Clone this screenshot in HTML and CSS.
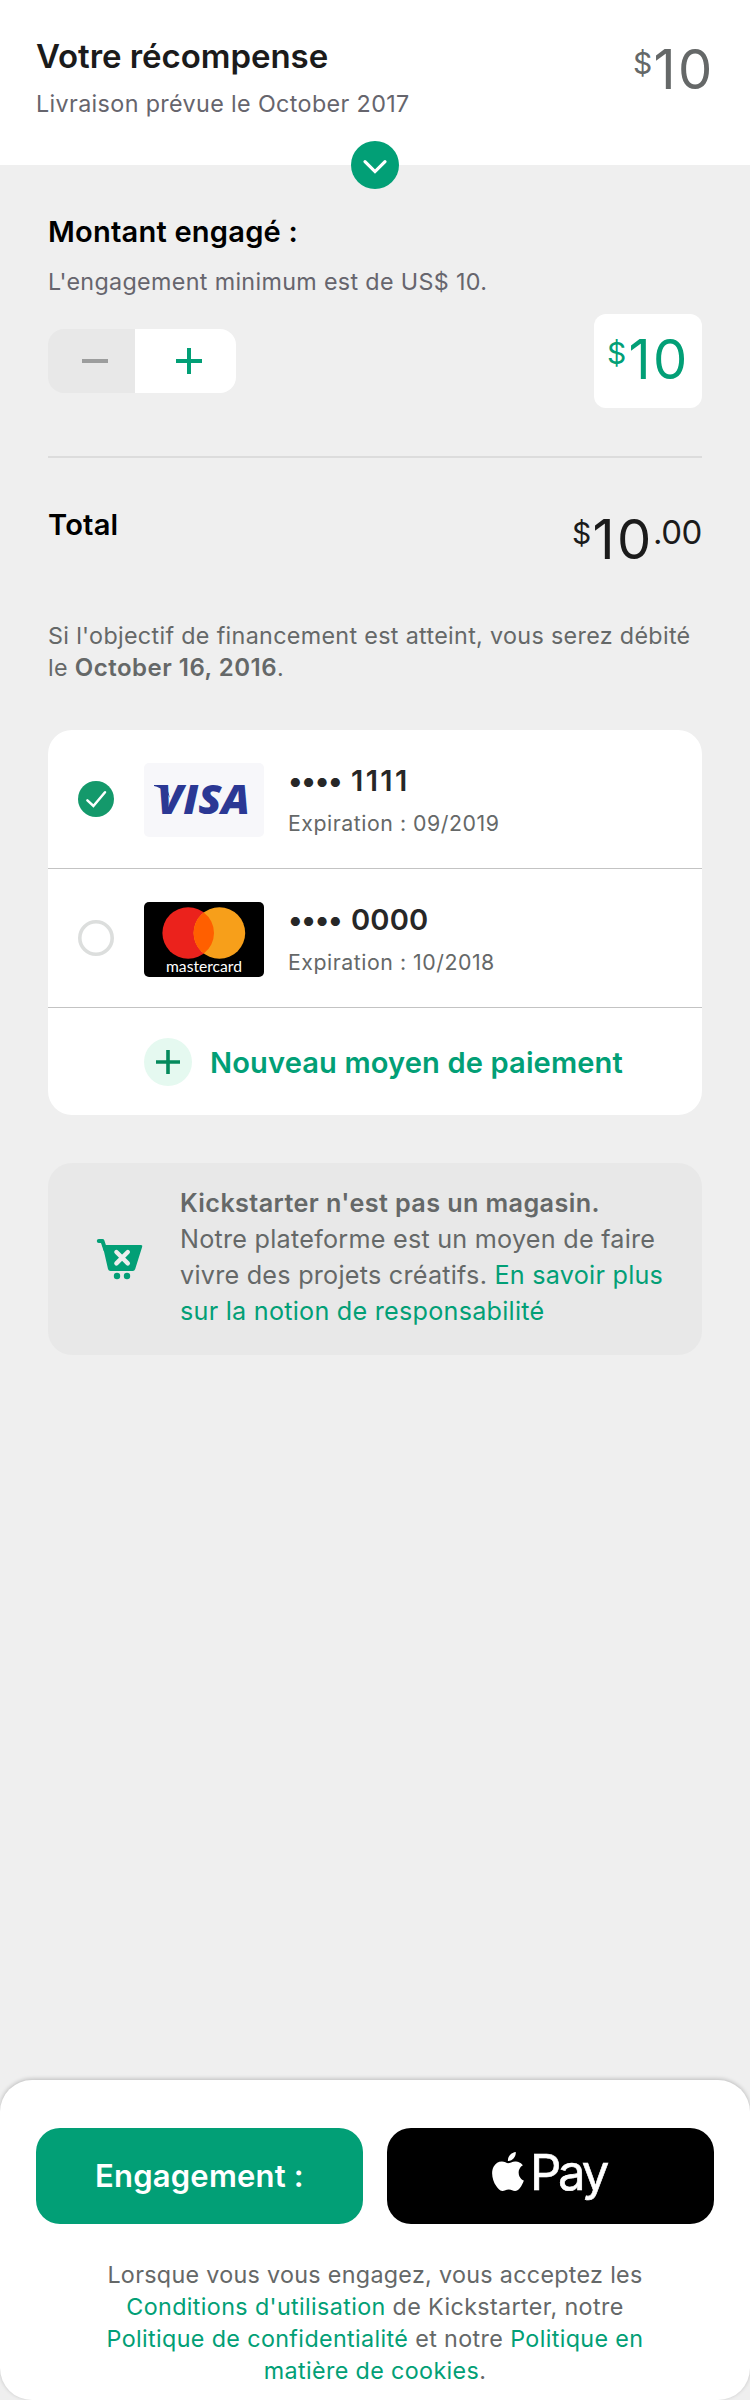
FILE: index.html
```html
<!DOCTYPE html>
<html lang="fr">
<head>
<meta charset="utf-8">
<title>Votre récompense</title>
<link rel="stylesheet" href="styles.css">
</head>
<body>
<div class="screen">
  <header class="reward">
    <div>
      <h1 class="reward-title">Votre récompense</h1>
      <p class="text reward-delivery">Livraison prévue le October 2017</p>
    </div>
    <div class="amount reward-amount"><span class="amount-sign">$</span><span class="amount-value">10</span></div>
    <button class="reward-toggle" aria-label="Détails">
      <svg width="48" height="48" viewBox="0 0 48 48"><path d="M14 20.6l10 10 10-10" fill="none" stroke="#fff" stroke-width="3.2" stroke-linecap="round"/></svg>
    </button>
  </header>

  <main class="content">
    <h2 class="heading">Montant engagé :</h2>
    <p class="text minimum">L'engagement minimum est de US$ 10.</p>
    <div class="pledge">
      <div class="stepper">
        <button class="step step-minus" aria-label="Moins"><svg width="26" height="26" viewBox="0 0 26 26"><path d="M0 13h26" stroke="#9c9d9d" stroke-width="4"/></svg></button>
        <button class="step step-plus" aria-label="Plus"><svg width="26" height="26" viewBox="0 0 26 26"><path d="M0 13h26M13 0v26" stroke="#029f76" stroke-width="4"/></svg></button>
      </div>
      <div class="amount pledge-amount"><span class="amount-sign">$</span><span class="amount-value">10</span></div>
    </div>
    <div class="rule"></div>
    <div class="total">
      <h2 class="heading">Total</h2>
      <div class="amount total-amount"><span class="amount-sign">$</span><span class="amount-value">10</span><span class="amount-cents">.00</span></div>
    </div>
    <p class="text debit">Si l'objectif de financement est atteint, vous serez débité<br>le <strong>October 16, 2016</strong>.</p>

    <section class="cards">
      <div class="card-row">
        <svg class="radio" width="36" height="36" viewBox="0 0 36 36"><circle cx="18" cy="18" r="18" fill="#14996b"/><path d="M9.4 19.3l6 5.7L27 11.2" fill="none" stroke="#fff" stroke-width="2.5" stroke-linecap="round"/></svg>
        <svg class="thumb" width="120" height="74" viewBox="0 0 120 74">
          <rect width="120" height="74" rx="5" fill="#f7f7fa"/>
          <path d="M10 22h12l4 13c-3-6-8-10-16-12z" fill="#2b3894"/>
          <text class="visa" x="13" y="51.4" textLength="93" lengthAdjust="spacingAndGlyphs">VISA</text>
        </svg>
        <div class="card-info">
          <div class="card-number"><span class="dots">••••</span><span class="digits digits-ones">1111</span></div>
          <div class="card-date">Expiration : 09/2019</div>
        </div>
      </div>
      <div class="card-row">
        <svg class="radio" width="36" height="36" viewBox="0 0 36 36"><circle cx="18" cy="18" r="16.2" fill="none" stroke="#dcdedd" stroke-width="3.6"/></svg>
        <svg class="thumb" width="120" height="75" viewBox="0 0 120 75">
          <rect width="120" height="75" rx="5" fill="#000"/>
          <circle cx="44.2" cy="31" r="25.8" fill="#eb221c"/>
          <circle cx="75.4" cy="31" r="25.8" fill="#f79f1a"/>
          <path d="M59.8 10.45a25.8 25.8 0 0 1 0 41.1a25.8 25.8 0 0 1 0-41.1z" fill="#ff5f00"/>
          <text class="mastercard" x="22" y="69.6" textLength="76" lengthAdjust="spacingAndGlyphs">mastercard</text>
        </svg>
        <div class="card-info">
          <div class="card-number"><span class="dots">••••</span><span class="digits">0000</span></div>
          <div class="card-date">Expiration : 10/2018</div>
        </div>
      </div>
      <div class="card-new">
        <svg width="48" height="48" viewBox="0 0 48 48"><circle cx="24" cy="24" r="24" fill="#e5f9f0"/><path d="M12 24h24M24 12v24" stroke="#048a5c" stroke-width="3.6"/></svg>
        <span class="card-new-label">Nouveau moyen de paiement</span>
      </div>
    </section>

    <aside class="notice">
      <svg class="cart" width="48" height="42" viewBox="0 0 48 42">
        <path d="M2.8 2.9h3.6l3 9" fill="none" stroke="#029f76" stroke-width="4" stroke-linecap="round" stroke-linejoin="round"/>
        <path d="M6.5 7h38.5q1.8 0 1.2 1.7l-7 22.3q-.7 2-2.3 2H14.5q-2 0-2.5-2z" fill="#029f76"/>
        <path d="M20.4 14l11.4 11.400M31.800 14L20.400 25.400" stroke="#eee" stroke-width="4.400" stroke-linecap="round"/>
        <circle cx="21" cy="38" r="3.200" fill="#029f76"/><circle cx="31" cy="38" r="3.200" fill="#029f76"/>
      </svg>
      <p class="notice-text"><strong>Kickstarter n'est pas un magasin.</strong><br>Notre plateforme est un moyen de faire<br>vivre des projets créatifs. <a class="link">En savoir plus<br>sur la notion de responsabilité</a></p>
    </aside>
  </main>

  <footer class="footer">
    <div class="actions">
      <button class="action action-pledge">Engagement :</button>
      <button class="action action-apple" aria-label="Apple Pay">
        <svg width="32" height="39" viewBox="2.2 0 19.6 24"><path fill="#fff" d="M12.152 6.896c-.948 0-2.415-1.078-3.960-1.040-2.040.027-3.910 1.183-4.961 3.014-2.117 3.675-.546 9.103 1.519 12.090 1.013 1.454 2.208 3.090 3.792 3.039 1.520-.065 2.090-.987 3.935-.987 1.831 0 2.350.987 3.960.948 1.637-.026 2.676-1.480 3.676-2.948 1.156-1.688 1.636-3.325 1.662-3.415-.039-.013-3.182-1.221-3.220-4.857-.026-3.040 2.480-4.494 2.597-4.559-1.429-2.090-3.623-2.324-4.390-2.376-2-.156-3.675 1.090-4.610 1.090zM15.530 3.830c.843-1.012 1.400-2.427 1.245-3.830-1.207.052-2.662.805-3.532 1.818-.780.896-1.454 2.338-1.273 3.714 1.338.104 2.715-.688 3.559-1.701"/></svg>
        <span class="pay">Pay</span>
      </button>
    </div>
    <p class="text terms"><span class="terms-intro">Lorsque vous vous engagez, vous acceptez les</span><br><a class="link">Conditions d'utilisation</a> de Kickstarter, notre<br><a class="link">Politique de confidentialité</a> et notre <a class="link">Politique en<br>matière de cookies</a>.</p>
  </footer>
</div>
</body>
</html>
```
FILE: styles.css
```css
* { box-sizing: border-box; }
body {
  margin: 0;
  background: #efefef;
  font-family: "Inter", "Liberation Sans", sans-serif;
  color: #656868;
}
h1, h2, p { margin: 0; font-weight: 400; }
button { border: 0; padding: 0; font-family: inherit; }
strong { font-weight: 600; }
svg { display: block; flex: none; }
.screen { display: flex; flex-direction: column; width: 750px; height: 2400px; overflow: hidden; }

.text { font-size: 23.3px; line-height: 32px; letter-spacing: .37px; white-space: nowrap; }
.heading { font-size: 29.1px; line-height: 36px; font-weight: 600; letter-spacing: .2px; color: #000; }
.link { color: #029f76; }

.amount { display: flex; align-items: flex-start; flex: none; }
.amount-sign { width: 20px; margin-top: 3.6px; font-size: 30px; line-height: 36px; text-indent: -1px; }
.amount-value { width: 60.5px; font-size: 54.3px; line-height: 56px; letter-spacing: 2.4px; }
.amount-cents { margin-top: 2.8px; font-size: 33px; line-height: 36px; letter-spacing: -.4px; }

.reward {
  position: relative;
  display: flex;
  justify-content: space-between;
  flex: none;
  height: 165px;
  padding: 36px 36px 0;
  background: #fff;
}
.reward-title { font-size: 33px; line-height: 40px; font-weight: 600; letter-spacing: -.05px; color: #1b1b1b; }
.reward-delivery { margin-top: 12px; color: #66656d; }
.reward-amount { width: 80px; margin-top: 5px; }
.reward-toggle {
  position: absolute;
  left: 351px;
  bottom: -24px;
  width: 48px;
  height: 48px;
  border-radius: 50%;
  background: #029f76;
}

.content { padding: 49px 48px 0; }
.minimum { margin-top: 16px; letter-spacing: .34px; color: #66656d; }
.pledge { display: flex; justify-content: space-between; align-items: center; margin-top: 16px; }
.stepper { display: flex; width: 188px; height: 64px; border-radius: 16px; overflow: hidden; }
.step { display: flex; align-items: center; justify-content: center; }
.step-minus { width: 87px; padding-left: 7px; background: #e8e8e8; }
.step-plus { width: 101px; padding-left: 7px; background: #fff; }
.pledge-amount { width: 108px; height: 94px; padding: 17px 0 0 14px; border-radius: 12px; background: #fff; color: #029f76; }
.pledge-amount .amount-sign { width: 20.5px; }
.rule { height: 2px; margin-top: 48px; background: #dcdcdc; }
.total { display: flex; justify-content: space-between; margin-top: 49px; }
.total-amount { width: 129px; margin-top: 4px; color: #1b1b1b; }
.debit { margin-top: 53px; letter-spacing: .33px; }
.debit strong { font-size: 24px; letter-spacing: .5px; }

.cards { margin-top: 46px; border-radius: 24px; background: #fff; }
.card-row { display: flex; align-items: center; height: 139px; padding-left: 30px; border-bottom: 1px solid #c3c3c3; }
.thumb { margin: 2px 24px 0 30px; }
.card-info { display: flex; flex-direction: column; gap: 10px; padding-top: 2px; }
.card-number { display: flex; font-size: 29.1px; line-height: 36px; font-weight: 600; color: #272727; }
.dots { width: 63px; letter-spacing: -1.3px; }
.digits { letter-spacing: .14px; }
.digits-ones { letter-spacing: 2.36px; }
.card-date { font-size: 21.3px; line-height: 28px; letter-spacing: .53px; }
.card-new { display: flex; align-items: center; gap: 18px; height: 107px; padding-left: 96px; }
.card-new-label { margin-top: 3px; font-size: 29.1px; line-height: 36px; font-weight: 600; letter-spacing: .12px; color: #029f76; }

.notice { display: flex; height: 192px; margin-top: 48px; border-radius: 24px; background: #e8e8e8; }
.cart { margin: 75px 36px 0 48px; }
.notice-text { padding-top: 22px; font-size: 25.2px; line-height: 36px; letter-spacing: .24px; white-space: nowrap; }
.notice-text strong { letter-spacing: .39px; }

.footer {
  flex: none;
  height: 320px;
  margin-top: auto;
  padding: 48px 36px 0;
  border-radius: 32px;
  background: #fff;
  box-shadow: 0 -1px 4px rgba(0, 0, 0, .22);
}
.actions { display: flex; gap: 24px; }
.action { display: flex; flex: none; width: 327px; height: 96px; border-radius: 24px; color: #fff; }
.action-pledge { align-items: center; justify-content: center; background: #029f76; font-size: 31px; line-height: 38px; font-weight: 600; letter-spacing: .2px; }
.action-apple { align-items: flex-start; gap: 6px; padding: 24px 0 0 105px; background: #000; }
.pay { margin-top: -3px; font-size: 49px; line-height: 48px; letter-spacing: -3.2px; -webkit-text-stroke: .6px #fff; }
.terms { margin-top: 35px; text-align: center; }
.terms-intro { letter-spacing: .31px; }

.visa { font: italic 800 41px "Open Sans", sans-serif; fill: #2b3894; }
.mastercard { font: 14.5px "Lato", sans-serif; fill: #fff; }
```
